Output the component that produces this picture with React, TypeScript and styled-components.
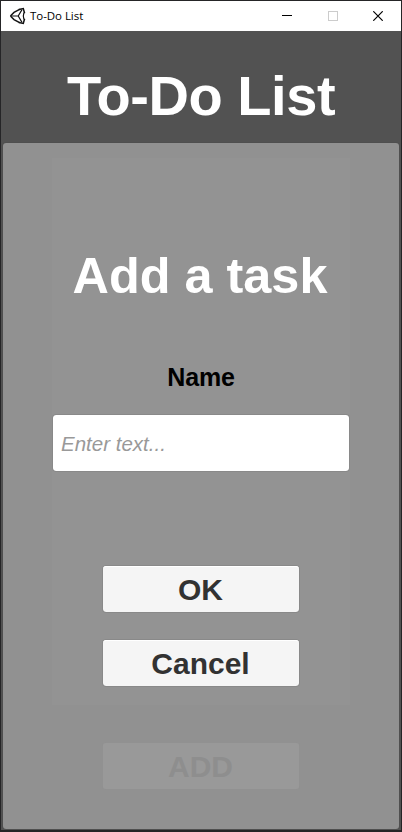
import React from "react";
import styled, { createGlobalStyle } from "styled-components";

const GlobalStyle = createGlobalStyle`
  * { box-sizing: border-box; }
  body { margin: 0; background: #252527; overflow: hidden; }
`;

const Window = styled.div`
  width: 402px;
  height: 832px;
  padding: 1px 1px 2px;
  display: flex;
  flex-direction: column;
  background: #252527;
  font-family: "Liberation Sans", Arial, sans-serif;
`;

const TitleBar = styled.header`
  height: 30px;
  flex: none;
  display: flex;
  align-items: center;
  padding-left: 8px;
  background: #fff;
  color: #000;
`;

const Caption = styled.span`
  flex: 1;
  margin-left: 4px;
  font: 11.5px/30px "Open Sans", "Noto Sans", sans-serif;
  letter-spacing: -0.05px;
`;

const WindowButton = styled.button<{ $dim?: boolean }>`
  width: 45.5px;
  height: 30px;
  padding: 0;
  border: 0;
  display: grid;
  place-items: center;
  background: none;
  color: ${(p) => (p.$dim ? "#ccc" : "#000")};
`;

const Client = styled.main`
  flex: 1;
  display: flex;
  flex-direction: column;
  padding: 0 2px 1px;
  background: #525252;
`;

const Heading = styled.h1`
  height: 112px;
  margin: 0;
  padding-top: 9px;
  flex: none;
  text-align: center;
  font-size: 56px;
  line-height: 112px;
  letter-spacing: -0.45px;
  color: #fff;
`;

const Panel = styled.section`
  flex: 1;
  display: flex;
  flex-direction: column;
  align-items: center;
  padding-top: 15px;
  border-radius: 3px;
  background: #919191;
  box-shadow: 0 0 1px #3c3c3c;
`;

const Dialog = styled.form`
  width: 298px;
  height: 547px;
  flex: none;
  display: flex;
  flex-direction: column;
  align-items: center;
  background: #939393;
`;

const DialogTitle = styled.h2`
  margin: 88px 0 0;
  padding-right: 2px;
  font-size: 50.4px;
  line-height: 60px;
  color: #fff;
  white-space: nowrap;
`;

const Label = styled.label`
  margin-top: 56px;
  font-size: 25px;
  font-weight: bold;
  line-height: 30px;
  letter-spacing: -0.2px;
  color: #000;
`;

const Field = styled.input`
  width: 296px;
  height: 56px;
  margin-top: 23px;
  padding: 2px 8px 0;
  border: 0;
  border-radius: 3px;
  background: #fff;
  box-shadow: 0 0 1px #333;
  font: italic 20.5px "Liberation Sans", Arial, sans-serif;
  outline: none;

  &::placeholder { color: #999; opacity: 1; }
`;

const Button = styled.button<{ $gap: number; $muted?: boolean }>`
  width: 196px;
  height: 46px;
  flex: none;
  margin-top: ${(p) => p.$gap}px;
  padding: 2px 1px 0 0;
  border: 0;
  border-radius: 3px;
  background: ${(p) => (p.$muted ? "#999" : "#f5f5f5")};
  box-shadow: ${(p) => (p.$muted ? "0 0 1px #949494" : "inset 0 1px #fff, 0 0 1px #333")};
  font: bold 30px/44px "Liberation Sans", Arial, sans-serif;
  color: ${(p) => (p.$muted ? "#8e8e8e" : "#323232")};
`;

const UnityLogo = () => (
  <svg width="17" height="18" viewBox="0 0 17 18" fill="none" stroke="#111">
    <path d="M1.4 9 5 5.4 10.6 2.3M1.4 9 5 12.6 10.6 15.7" strokeWidth="1.4" />
    <path d="M9.8 2.6 14.3 1.6 15.6 6.2M15.6 11.8 14.3 16.4 9.8 15.4" strokeWidth="1.5" />
    <path d="M2 9H9.2M9.2 9 13 2.6M9.2 9 13 15.4" strokeWidth="1.2" />
    <path d="M14.9 5.6Q13.8 9 14.9 12.4" strokeWidth="1.2" />
  </svg>
);

export default function App() {
  return (
    <Window>
      <GlobalStyle />
      <TitleBar>
        <UnityLogo />
        <Caption>To-Do List</Caption>
        <WindowButton aria-label="Minimize">
          <svg width="10" height="10" shapeRendering="crispEdges">
            <path d="M0 4.5H10" stroke="currentColor" />
          </svg>
        </WindowButton>
        <WindowButton aria-label="Maximize" $dim disabled>
          <svg width="10" height="10" shapeRendering="crispEdges">
            <rect x=".5" y=".5" width="9" height="9" fill="none" stroke="currentColor" />
          </svg>
        </WindowButton>
        <WindowButton aria-label="Close">
          <svg width="10" height="10">
            <path d="M.3.3 9.7 9.7M9.7.3.3 9.7" stroke="currentColor" strokeWidth="1.2" />
          </svg>
        </WindowButton>
      </TitleBar>
      <Client>
        <Heading>To-Do List</Heading>
        <Panel>
          <Dialog onSubmit={(e) => e.preventDefault()}>
            <DialogTitle>Add a task</DialogTitle>
            <Label htmlFor="task-name">Name</Label>
            <Field id="task-name" placeholder="Enter text..." />
            <Button type="submit" $gap={95}>OK</Button>
            <Button type="button" $gap={28}>Cancel</Button>
          </Dialog>
          <Button type="button" $gap={38} $muted>ADD</Button>
        </Panel>
      </Client>
    </Window>
  );
}
